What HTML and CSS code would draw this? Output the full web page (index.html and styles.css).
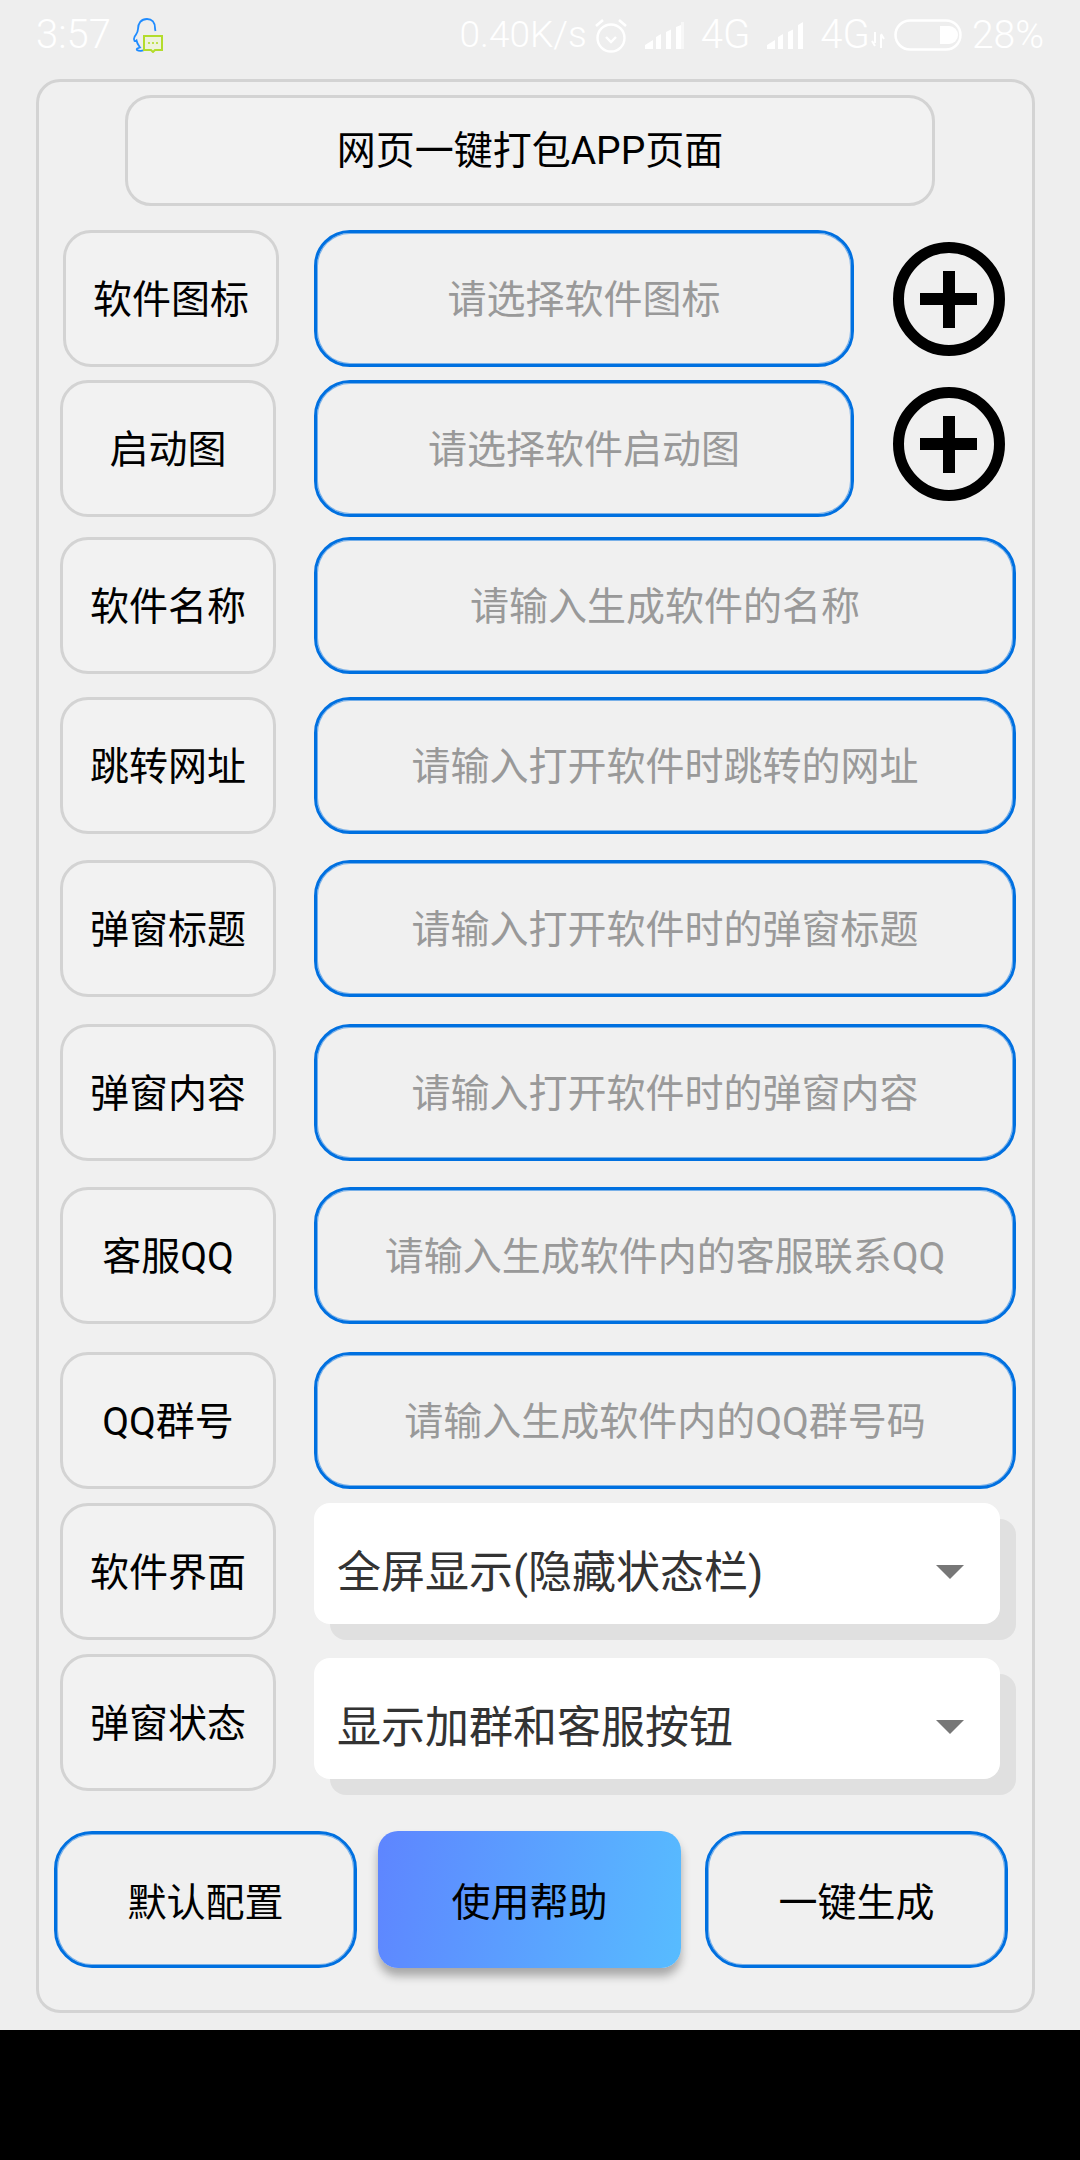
FILE: index.html
```html
<!DOCTYPE html>
<html lang="zh-CN">
<head>
<meta charset="utf-8">
<title>网页一键打包APP页面</title>
<link rel="stylesheet" href="styles.css">
</head>
<body>
<div class="screen">
  <header class="status">
    <div class="status-left">
      <span class="time">3:57</span>
      <svg class="qq" viewBox="0 0 32 36" width="32" height="36">
        <path d="M16 2c-6 0-9 4.500-9 10 0 3-1 4-3 7-1 2-2 3-.5 5 1 .5 2-.5 2-.5 .5 3 2 5 3.500 7-2 .5-4 1.500-3 2.500 2 1.500 6 1 8-.5" fill="none" stroke="#1e8bff" stroke-width="1.800"/>
        <path d="M16 2c5 0 8 3.500 8 9 0 1 .2 2 .5 3" fill="none" stroke="#1e8bff" stroke-width="1.800"/>
        <path d="M13 19h18v14h-7l-2 2-2-2h-7z" fill="#eef3dc" stroke="#b3dc2c" stroke-width="2"/>
        <circle cx="18" cy="26" r="1.100" fill="#b3dc2c"/><circle cx="22" cy="26" r="1.100" fill="#b3dc2c"/><circle cx="26" cy="26" r="1.100" fill="#b3dc2c"/>
      </svg>
    </div>
    <div class="status-right">
      <span class="speed">0.40K/s</span>
      <svg class="alarm" viewBox="0 0 34 36" width="34" height="36">
        <circle cx="17" cy="21" r="13.500" fill="none" stroke="#fff" stroke-width="2.400"/>
        <path d="M12 20l5 5 5-5" fill="none" stroke="#fff" stroke-width="2.400"/>
        <path d="M2 9l7-6M32 9l-7-6" fill="none" stroke="#fff" stroke-width="2.600"/>
      </svg>
      <svg class="signal" viewBox="0 0 40 30" width="40" height="30">
        <path d="M0 29v-4l8-5v9zM11 29V17l5-3v15zM21 29V12l5-2.500V29zM31 29V7l5-2v24z" fill="#fff"/>
        <path d="M36 29V2h3v27z" fill="#fff" opacity=".5"/>
      </svg>
      <span class="net">4G</span>
      <svg class="signal sig2" viewBox="0 0 40 30" width="40" height="30">
        <path d="M0 29v-4l8-5v9zM11 29V17l5-3v15zM21 29V12l5-2.500V29zM31 29V5l5-3v27z" fill="#fff"/>
      </svg>
      <span class="net">4G</span>
      <svg class="arrows" viewBox="0 0 14 16" width="14" height="16">
        <path d="M4 0v11M1 9l3 5M10 16V3M10 2l3 5" fill="none" stroke="#fff" stroke-width="2"/>
      </svg>
      <svg class="battery" viewBox="0 0 68 32" width="68" height="32">
        <rect x="1.500" y="1.500" width="65" height="29" rx="14.500" fill="none" stroke="#fff" stroke-width="2.500"/>
        <path d="M46 7h9a9 9 0 0 1 0 18h-9z" fill="#fff"/>
      </svg>
      <span class="net pct">28%</span>
    </div>
  </header>

  <main class="card">
    <h1 class="title">网页一键打包APP页面</h1>

    <div class="row row-1">
      <div class="label label-shift">软件图标</div>
      <div class="field field-short">请选择软件图标</div>
      <svg class="plus plus-1" viewBox="0 0 112 114" width="112" height="114">
        <ellipse cx="56" cy="57" rx="50.500" ry="51.500" fill="none" stroke="#000" stroke-width="11"/>
        <path d="M27 51h57v12H27zM50 29h12v57H50z" fill="#000"/>
      </svg>
    </div>
    <div class="row row-2">
      <div class="label">启动图</div>
      <div class="field field-short">请选择软件启动图</div>
      <svg class="plus plus-2" viewBox="0 0 112 114" width="112" height="114">
        <ellipse cx="56" cy="57" rx="50.500" ry="51.500" fill="none" stroke="#000" stroke-width="11"/>
        <path d="M27 51h57v12H27zM50 29h12v57H50z" fill="#000"/>
      </svg>
    </div>
    <div class="row row-3">
      <div class="label">软件名称</div>
      <div class="field">请输入生成软件的名称</div>
    </div>
    <div class="row row-4">
      <div class="label">跳转网址</div>
      <div class="field">请输入打开软件时跳转的网址</div>
    </div>
    <div class="row row-5">
      <div class="label">弹窗标题</div>
      <div class="field">请输入打开软件时的弹窗标题</div>
    </div>
    <div class="row row-6">
      <div class="label">弹窗内容</div>
      <div class="field">请输入打开软件时的弹窗内容</div>
    </div>
    <div class="row row-7">
      <div class="label">客服QQ</div>
      <div class="field">请输入生成软件内的客服联系QQ</div>
    </div>
    <div class="row row-8">
      <div class="label">QQ群号</div>
      <div class="field">请输入生成软件内的QQ群号码</div>
    </div>
    <div class="row row-9">
      <div class="label">软件界面</div>
      <div class="select"><span class="select-text">全屏显示(隐藏状态栏)</span><i class="caret"></i></div>
    </div>
    <div class="row row-10">
      <div class="label">弹窗状态</div>
      <div class="select select-low"><span class="select-text">显示加群和客服按钮</span><i class="caret"></i></div>
    </div>

    <div class="actions">
      <div class="btn">默认配置</div>
      <div class="btn btn-primary">使用帮助</div>
      <div class="btn">一键生成</div>
    </div>
  </main>
  <div class="navbar"></div>
</div>
</body>
</html>
```
FILE: styles.css
```css
* { box-sizing: border-box; }
html, body { margin: 0; padding: 0; }
body {
  width: 1080px;
  height: 2160px;
  background: #eeeeee;
  font-family: Roboto, "Noto Sans CJK SC", sans-serif;
  color: #000;
}
.screen { display: flex; flex-direction: column; height: 2160px; }

.status {
  height: 79px;
  flex: none;
  display: flex;
  justify-content: space-between;
  align-items: center;
  padding: 0 36px 10px;
  color: #fff;
  font-weight: 300;
}
.status-left, .status-right { display: flex; align-items: center; }
.time { font-size: 40px; }
.qq { margin-left: 20px; }
.speed { font-size: 37px; }
.net { font-size: 40px; }
.alarm { margin-left: 7px; }
.signal { margin-left: 17px; margin-right: 16px; }
.sig2 { margin-right: 13px; }
.arrows { margin-left: 1px; margin-top: 10px; }
.battery { margin-left: 9px; }
.pct { margin-left: 10px; font-size: 39px; }

.card {
  width: 999px;
  height: 1934px;
  flex: none;
  margin-left: 36px;
  border: 3px solid #d3d3d3;
  border-radius: 24px;
  background: #f0f0f0;
  padding: 13px 0 0 21px;
}
.title {
  width: 810px;
  height: 111px;
  margin: 0 0 0 65px;
  padding-bottom: 7px;
  display: flex;
  align-items: center;
  justify-content: center;
  border: 3px solid #d3d3d3;
  border-radius: 26px;
  background: #f2f2f2;
  font-size: 39px;
  font-weight: 400;
}

.row { display: flex; align-items: flex-start; }
.row-1 { margin-top: 24px; }
.row-2 { margin-top: 13px; }
.row-3 { margin-top: 20px; }
.row-4 { margin-top: 23px; }
.row-5 { margin-top: 26px; }
.row-6 { margin-top: 27px; }
.row-7 { margin-top: 26px; }
.row-8 { margin-top: 28px; }
.row-9 { margin-top: 14px; }
.row-10 { margin-top: 14px; }

.label {
  width: 216px;
  height: 137px;
  flex: none;
  padding-bottom: 6px;
  display: flex;
  align-items: center;
  justify-content: center;
  border: 3px solid #d3d3d3;
  border-radius: 28px;
  background: #f2f2f2;
  font-size: 39px;
}
.label-shift { margin-left: 3px; margin-right: -3px; }

.field {
  width: 702px;
  height: 137px;
  margin-left: 38px;
  padding-bottom: 6px;
  display: flex;
  align-items: center;
  justify-content: center;
  border: 3px solid #0070e0;
  border-radius: 36px;
  box-shadow: inset 0 0 0 1px rgba(0, 112, 224, .5);
  background: #f0f0f0;
  color: #999;
  font-size: 39px;
}
.field-short { width: 540px; }

.plus { flex: none; margin-left: 39px; }
.plus-1 { margin-top: 12px; }
.plus-2 { margin-top: 7px; }

.select {
  width: 686px;
  height: 121px;
  margin-left: 38px;
  display: flex;
  align-items: center;
  justify-content: space-between;
  padding: 16px 36px 0 23px;
  background: #fff;
  border-radius: 16px;
  box-shadow: 16px 16px 0 #e0e0e0;
  color: #333;
  font-size: 44px;
}
.select-text { padding-bottom: 5px; }
.select-low { margin-top: 4px; }
.caret {
  width: 0;
  height: 0;
  border-left: 14px solid transparent;
  border-right: 14px solid transparent;
  border-top: 14px solid #777;
}

.actions {
  display: flex;
  margin-top: 40px;
  margin-left: -6px;
}
.btn {
  width: 303px;
  height: 137px;
  padding-bottom: 2px;
  display: flex;
  align-items: center;
  justify-content: center;
  border: 3px solid #0070e0;
  border-radius: 38px;
  box-shadow: inset 0 0 0 1px rgba(0, 112, 224, .5);
  font-size: 39px;
}
.btn + .btn { margin-left: 21px; }
.btn + .btn + .btn { margin-left: 24px; }
.btn-primary {
  border: 0;
  border-radius: 20px;
  background: linear-gradient(100deg, #5e85ff, #57bcff);
  box-shadow: 0 8px 10px rgba(0, 0, 0, .3);
}

.navbar { flex: 1; margin-top: 17px; background: #000; }
```
